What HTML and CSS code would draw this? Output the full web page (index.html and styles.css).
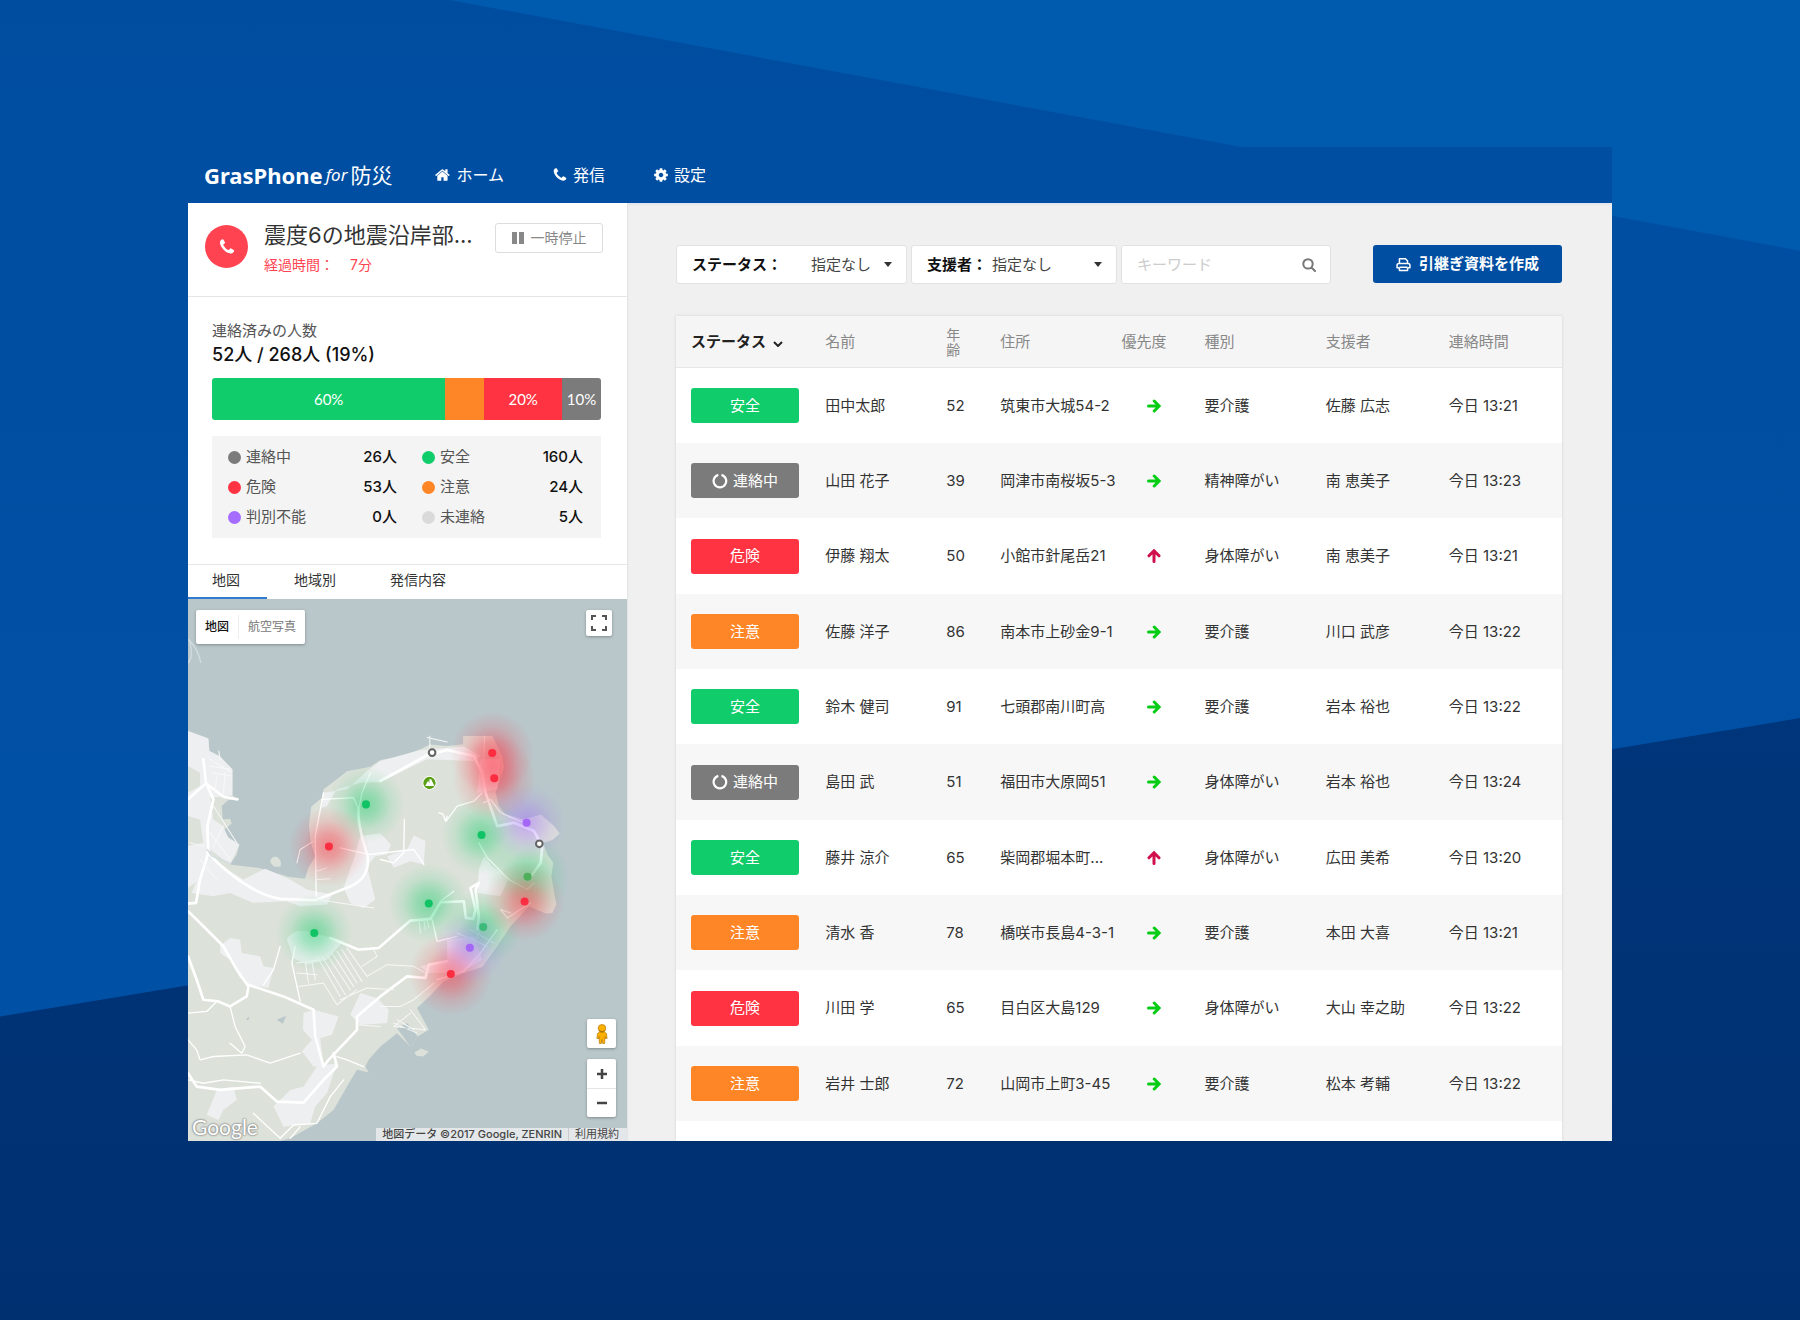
FILE: index.html
```html
<!DOCTYPE html>
<html lang="ja">

<head>
    <meta charset="utf-8" />
    <title>GrasPhone for 防災</title>
    <link rel="stylesheet" href="styles.css">
</head>

<body>

<svg class="sprite" aria-hidden="true">
    <symbol id="i-home" viewBox="0 0 1792 1792"><path d="M1408 992v480q0 26-19 45t-45 19h-384v-384h-256v384h-384q-26 0-45-19t-19-45v-480q0-1 .5-3t.5-3l575-474 575 474q1 2 1 6zm223-69l-62 74q-8 9-21 11h-3q-13 0-21-7l-692-577-692 577q-12 8-24 7-13-2-21-11l-62-74q-8-10-7-23.500t11-21.500l719-599q32-26 76-26t76 26l244 204v-195q0-14 9-23t23-9h192q14 0 23 9t9 23v408l219 182q10 8 11 21.500t-7 23.500z"/></symbol>
    <symbol id="i-phone" viewBox="0 0 1792 1792"><path d="M1600 1240q0 27-10 70.500t-21 68.500q-21 50-122 106-94 51-186 51-27 0-53-3.500t-57.500-12.500-47-14.500-55.500-20.500-49-18q-98-35-175-83-127-79-264-216t-216-264q-48-77-83-175-3-9-18-49t-20.500-55.500-14.500-47-12.500-57.500-3.500-53q0-92 51-186 56-101 106-122 25-11 68.500-21t70.500-10q14 0 21 3 18 6 53 76 11 19 30 54t35 63.500 31 53.500q3 4 17.500 25t21.500 35.500 7 28.500q0 20-28.500 50t-62 55-62 53-28.500 46q0 9 5 22.500t8.500 20.500 14 24 11.500 19q76 137 174 235t235 174q2 1 19 11.500t24 14 20.500 8.500 22.500 5q18 0 46-28.500t53-62 55-62 50-28.500q14 0 28.500 7t35.500 21.500 25 17.500q25 15 53.500 31t63.500 35 54 30q70 35 76 53 3 7 3 21z"/></symbol>
    <symbol id="i-cog" viewBox="0 0 1792 1792"><path d="M1152 896q0-106-75-181t-181-75-181 75-75 181 75 181 181 75 181-75 75-181zm512-109v222q0 12-8 23t-20 13l-185 28q-19 54-39 91 35 50 107 138 10 12 10 25t-9 23q-27 37-99 108t-94 71q-12 0-26-9l-138-108q-44 23-91 38-16 136-29 186-7 28-36 28h-222q-14 0-24.500-8.500t-11.500-21.500l-28-184q-49-16-90-37l-141 107q-10 9-25 9-14 0-25-11-126-114-165-168-7-10-7-23 0-12 8-23 15-21 51-66.500t54-70.500q-27-50-41-99l-183-27q-13-2-21-12.500t-8-23.500v-222q0-12 8-23t19-13l186-28q14-46 39-92-40-57-107-138-10-12-10-24 0-10 9-23 26-36 98.500-107.500t94.500-71.500q13 0 26 10l138 107q44-23 91-38 16-136 29-186 7-28 36-28h222q14 0 24.500 8.500t11.500 21.500l28 184q49 16 90 37l142-107q9-9 24-9 13 0 25 10 129 119 165 170 7 8 7 22 0 12-8 23-15 21-51 66.500t-54 70.500q26 50 41 98l183 28q13 2 21 12.500t8 23.500z"/></symbol>
    <symbol id="i-print" viewBox="0 0 14 14"><path d="M3.200 6V1.700h5.600l2 2V6M3.200 9.800v2.700h7.600V9.800M2.800 10H1V7.700Q1 6 2.800 6h8.400Q13 6 13 7.700V10h-1.800M3.200 9.600h7.600" fill="none" stroke="currentColor" stroke-width="1.400" stroke-linejoin="round"/></symbol>
    <symbol id="i-search" viewBox="0 0 14 14"><path d="M6 1.200a4.700 4.700 0 1 0 0 9.400a4.700 4.700 0 1 0 0-9.400M9.500 9.500L13 13" fill="none" stroke="currentColor" stroke-width="2" stroke-linecap="round"/></symbol>
    <symbol id="i-pause" viewBox="0 0 12 12"><path d="M0 0h5v12H0zM7 0h5v12H7z"/></symbol>
    <symbol id="i-arrow" viewBox="0 0 14 14"><path d="M1.500 7h10M7.200 2L12.200 7l-5 5" fill="none" stroke="currentColor" stroke-width="3" stroke-linecap="round"/></symbol>
    <symbol id="i-chevron" viewBox="0 0 10 6"><path d="M1 1l4 4 4-4" fill="none" stroke="currentColor" stroke-width="2"/></symbol>
    <symbol id="i-ring" viewBox="0 0 16 16"><path d="M9.500 1.900a6.300 6.300 0 1 1-3.200 0" fill="none" stroke="currentColor" stroke-width="2.200"/></symbol>
    <symbol id="i-full" viewBox="0 0 16 16"><path d="M1 5V1h4M11 1h4v4M15 11v4h-4M5 15H1v-4" fill="none" stroke="currentColor" stroke-width="2"/></symbol>
    <symbol id="i-plus" viewBox="0 0 12 12"><path d="M1 6h10M6 1v10" fill="none" stroke="currentColor" stroke-width="2.500"/></symbol>
    <symbol id="i-minus" viewBox="0 0 12 12"><path d="M1 6h10" fill="none" stroke="currentColor" stroke-width="2.500"/></symbol>
    <symbol id="i-pegman" viewBox="0 0 12 20">
        <path d="M3.500 8h5l2 1.500.6 5h-1.700l-.4-2-.4 7H6.700L6 15.500 5.300 19.500H3.400l-.4-7-.4 2H.9l.6-5z" fill="#fbaf00" stroke="#b5790a" stroke-width=".7"/>
        <circle cx="6" cy="4.300" r="3.800" fill="#fbaf00" stroke="#b5790a" stroke-width=".7"/>
        <path d="M3.200 6.600Q6 9.200 8.800 6.600" fill="none" stroke="#a36c06"/>
    </symbol>
</svg>

<div class="stage">
    <div class="app">

        <header class="topbar">
            <a class="logo" href="#"><b>GrasPhone</b><i>for</i><span>防災</span></a>
            <nav class="nav">
                <a href="#"><svg><use href="#i-home"/></svg>ホーム</a>
                <a href="#"><svg><use href="#i-phone"/></svg>発信</a>
                <a href="#"><svg><use href="#i-cog"/></svg>設定</a>
            </nav>
        </header>

        <div class="body">
            <aside class="side">

                <section class="event">
                    <span class="event-icon"><svg><use href="#i-phone"/></svg></span>
                    <div class="event-text">
                        <h1>震度6の地震沿岸部...</h1>
                        <p>経過時間：<span>7分</span></p>
                    </div>
                    <button type="button" class="pause"><svg><use href="#i-pause"/></svg>一時停止</button>
                </section>

                <section class="progress">
                    <h2>連絡済みの人数</h2>
                    <p class="total">52人 / 268人 (19%)</p>
                    <div class="bar">
                        <span class="safe" style="width:60%">60%</span>
                        <span class="caution" style="width:10%"></span>
                        <span class="danger" style="width:20%">20%</span>
                        <span class="calling" style="width:10%">10%</span>
                    </div>
                    <ul class="legend">
                        <li><i class="dot calling"></i>連絡中<b>26人</b></li>
                        <li><i class="dot safe"></i>安全<b>160人</b></li>
                        <li><i class="dot danger"></i>危険<b>53人</b></li>
                        <li><i class="dot caution"></i>注意<b>24人</b></li>
                        <li><i class="dot unknown"></i>判別不能<b>0人</b></li>
                        <li><i class="dot pending"></i>未連絡<b>5人</b></li>
                    </ul>
                </section>

                <nav class="tabs">
                    <a class="active" href="#">地図</a>
                    <a href="#">地域別</a>
                    <a href="#">発信内容</a>
                </nav>

                <div class="map">
                    <svg class="map-canvas" viewBox="24 120 1317 1623" preserveAspectRatio="xMinYMin slice" role="img" aria-label="地図">
                        <defs>
                            <radialGradient id="g-green"><stop offset="0" stop-color="#10cc66" stop-opacity=".48"/><stop offset=".3" stop-color="#10cc66" stop-opacity=".34"/><stop offset=".65" stop-color="#10cc66" stop-opacity=".12"/><stop offset="1" stop-color="#10cc66" stop-opacity="0"/></radialGradient>
                            <radialGradient id="g-red"><stop offset="0" stop-color="#ff3040" stop-opacity=".52"/><stop offset=".3" stop-color="#ff3040" stop-opacity=".38"/><stop offset=".65" stop-color="#ff3040" stop-opacity=".14"/><stop offset="1" stop-color="#ff3040" stop-opacity="0"/></radialGradient>
                            <radialGradient id="g-purple"><stop offset="0" stop-color="#a066ff" stop-opacity=".46"/><stop offset=".3" stop-color="#a066ff" stop-opacity=".32"/><stop offset=".65" stop-color="#a066ff" stop-opacity=".12"/><stop offset="1" stop-color="#a066ff" stop-opacity="0"/></radialGradient>
                        </defs>

                        <!-- land -->
                        <path class="land" d="M24 515L85 538L88 575L120 592L157 630L157 708L177 722L145 722L125 740L128 780L150 778L155 792L132 812L145 835L178 855L170 885L150 915L204 922L235 925L270 935L324 952L374 958L385 925L405 890L392 850L386 800L393 742L425 715L430 690L470 660L500 636L570 622L600 602L660 592L720 570L748 556L800 560L848 555L848 530L935 530L965 590L970 625L945 700L955 740L975 765L1030 780L1080 765L1120 800L1137 822L1115 842L1088 850L1100 885L1118 910L1112 950L1127 1035L1115 1060L1095 1062L1045 1040L990 1100L950 1160L905 1222L850 1240L790 1265L752 1305L710 1345L745 1410L712 1430L690 1460L650 1420L600 1460L565 1500L555 1520L565 1538L530 1530L500 1580L460 1650L410 1690L330 1735L300 1743L24 1743Z"/>
                        <path class="land" d="M270 908Q272 890 290 892Q308 905 300 922L282 922ZM702 1478L722 1466L745 1476L728 1490L708 1488Z"/>
                        <path class="water" d="M650 1405L680 1390L712 1430L690 1460ZM290 1380L318 1368L308 1392ZM198 1378L208 1370L204 1382Z"/>

                        <!-- built-up areas -->
                        <path class="town" d="M24 515L85 538L88 575L120 592L157 630L157 708L90 715L100 780L128 800L145 835L178 855L150 915L90 870L72 905L60 960L24 985Z"/>
                        <path class="park" d="M24 620L60 640L60 680L24 700ZM24 770L60 780L70 850L24 860Z"/>
                        <path class="town" d="M35 1000L80 890L190 960L255 928L330 960L380 990L455 1005L440 1035L360 1040L320 1025L220 1030L150 1000L100 1010Z"/>
                        <path class="town" d="M425 745L430 700L500 690L560 635L600 605L720 572L850 562L900 590L880 605L740 600L600 668L540 670L470 690L440 740Z"/>
                        <path class="town" d="M490 985L520 900L540 830L600 822L632 855L620 885L585 890L560 920L585 1020L550 1045L510 1030Z"/>
                        <path class="town" d="M620 890L680 870L700 828L735 845L730 915L690 905L640 925Z"/>
                        <path class="town" d="M895 930L910 890L935 920L985 955L960 1010L890 1000Z"/>
                        <path class="town" d="M320 1140Q340 1100 400 1120L490 1145L440 1200L380 1215L340 1195Z"/>
                        <path class="town" d="M120 1160L150 1135L180 1140L185 1180L240 1190L250 1220L280 1225L265 1285L210 1275L180 1255L150 1200L120 1180Z"/>
                        <path class="town" d="M510 1365L540 1300L590 1315L625 1350L620 1390L540 1395Z"/>
                        <path class="town" d="M370 1360L400 1350L475 1370L455 1425L420 1435L430 1520L400 1520L365 1475L395 1440L368 1410Z"/>
                        <path class="town" d="M370 1580L410 1520L470 1510L440 1600L405 1640L390 1690L310 1700L280 1640L330 1590Z"/>
                        <path class="town" d="M110 1590L160 1580L170 1620L130 1650L115 1680L80 1665Z"/>
                        <path class="town" d="M800 1140L880 1130L905 1200L840 1240L740 1240L720 1220L800 1200ZM900 600L960 600L950 690L890 700Z"/>

                        <!-- main roads -->
                        <path class="road wide" d="M24 720L78 672L70 600M78 672L130 712L172 720M78 672L100 720L82 800L85 880L60 960L48 1030L24 1032M82 880Q200 1000 300 1018L405 1022L500 985Q570 960 562 890Q530 790 535 750M24 1055L70 1100L130 1160L170 1230L205 1280L200 1310L150 1340L115 1325L70 1320L50 1260L24 1190M205 1275L310 1310L400 1350L405 1430L430 1520L445 1500L530 1410L530 1370L600 1310L680 1250L735 1255L745 1215L800 1205M24 1540L50 1580L120 1590L240 1580L290 1625L370 1628L430 1560L470 1520L460 1480"/>
                        <path class="road wide" d="M600 665L740 588L800 572L880 590L905 640L915 700L950 800L1000 790L1060 815L1085 860L1080 910L1045 960M450 1135L535 1170L595 1165L690 1083L750 1078L780 1028L850 1025L856 1075L878 1078L885 1050L870 985L895 970L885 990L895 1070L890 1110"/>
                        <path class="road" d="M345 1160L335 1210L360 1325M300 1160L280 1230L250 1275M535 750L545 700L570 640M425 720L520 715L535 750M430 700L405 830L408 1010M480 865L565 885L700 870L730 915M600 900L640 910L670 880L672 780M24 1360L80 1355L110 1325M150 1340L165 1400L195 1460L185 1480L150 1450M24 1440L50 1470L60 1500L100 1490L200 1485L270 1510L360 1480M24 1560L70 1570L130 1560L240 1570M220 1660L300 1735L340 1695L410 1690L450 1610L490 1560M330 1735L360 1700M820 995L780 1025M800 770L795 785L788 765L775 760M797 785L830 740L880 725L905 700M895 850L920 895L985 960L1040 990L1060 970M910 730L930 720L960 760L1030 790M1050 1030L980 1075L960 1050L990 1060M950 1110L900 1180L850 1235L770 1260M755 1080L770 1145L830 1130M470 1490L500 1500L550 1520"/>
                        <path class="road thin" d="M350 1210L420 1200M350 1240L410 1245M355 1280L430 1270L470 1335M375 1205L385 1270M395 1205L405 1260M410 1190L480 1310M425 1190L495 1305M440 1185L510 1290M455 1180L520 1280M470 1175L530 1270M485 1170L545 1265M500 1165L560 1250M480 1320L560 1285L640 1290M560 1250L620 1215L700 1220L735 1240M545 1220L590 1190L580 1170M470 1335L530 1290M600 1340L660 1340L700 1320L760 1270M690 1350L735 1410L640 1400L690 1360M640 1390L710 1420M650 1380L700 1410M530 1395L600 1400M715 1080L720 1120M730 1080L735 1110M740 1080L745 1105M830 1120L920 1160M870 1110L940 1150M900 1110L870 1170M740 535L800 548M748 530L748 570M912 530L910 600M116 575L120 600M90 600L155 640M88 620L150 630M95 640L155 650M110 650L105 700M135 640L130 705M100 740L170 850M90 820L150 900M100 860L130 800M60 900L110 960M30 850L70 860M350 910L360 870L400 845M410 935L440 925M410 960L450 958M410 1020L580 1045"/>
                        <path class="rail" d="M82 870L95 890L150 912M24 310Q40 300 30 250M62 310Q55 270 26 242"/>

                        <circle cx="402" cy="1120" r="115" fill="url(#g-green)"/>
                        <circle cx="557" cy="735" r="115" fill="url(#g-green)"/>
                        <circle cx="745" cy="1032" r="120" fill="url(#g-green)"/>
                        <circle cx="903" cy="827" r="120" fill="url(#g-green)"/>
                        <circle cx="1041" cy="952" r="125" fill="url(#g-green)"/>
                        <circle cx="908" cy="1102" r="115" fill="url(#g-green)"/>
                        <circle cx="446" cy="861" r="120" fill="url(#g-red)"/>
                        <circle cx="935" cy="581" r="125" fill="url(#g-red)"/>
                        <circle cx="941" cy="657" r="125" fill="url(#g-red)"/>
                        <circle cx="1032" cy="1026" r="120" fill="url(#g-red)"/>
                        <circle cx="811" cy="1243" r="125" fill="url(#g-red)"/>
                        <circle cx="1038" cy="790" r="115" fill="url(#g-purple)"/>
                        <circle cx="868" cy="1164" r="110" fill="url(#g-purple)"/>

                        <g class="pin">
                            <circle class="green" cx="402" cy="1120" r="12"/>
                            <circle class="green" cx="557" cy="735" r="12"/>
                            <circle class="green" cx="745" cy="1032" r="12"/>
                            <circle class="green" cx="903" cy="827" r="12"/>
                            <circle class="olive" cx="1041" cy="952" r="12"/>
                            <circle class="teal" cx="908" cy="1102" r="12"/>
                            <circle class="red" cx="446" cy="861" r="12"/>
                            <circle class="red" cx="935" cy="581" r="12"/>
                            <circle class="red" cx="941" cy="657" r="12"/>
                            <circle class="red" cx="1032" cy="1026" r="12"/>
                            <circle class="red" cx="811" cy="1243" r="12"/>
                            <circle class="purple" cx="1038" cy="790" r="12"/>
                            <circle class="purple" cx="868" cy="1164" r="12"/>
                        </g>
                        <circle class="station" cx="755" cy="580" r="10"/>
                        <circle class="station" cx="1076" cy="853" r="10"/>
                        <circle cx="747" cy="671" r="20" fill="#5a9f16" stroke="#fff" stroke-width="3"/>
                        <path d="M734 680L743 664L747 672L747 660H752L762 680Z" fill="#fff"/>
                    </svg>

                    <div class="map-type">
                        <button type="button" class="on">地図</button>
                        <button type="button">航空写真</button>
                    </div>
                    <button type="button" class="map-full" aria-label="全画面"><svg><use href="#i-full"/></svg></button>
                    <div class="map-tools">
                        <button type="button" class="pegman" aria-label="ストリートビュー"><svg><use href="#i-pegman"/></svg></button>
                        <div class="zoom">
                            <button type="button" aria-label="拡大"><svg><use href="#i-plus"/></svg></button>
                            <button type="button" aria-label="縮小"><svg><use href="#i-minus"/></svg></button>
                        </div>
                    </div>
                    <span class="google">Google</span>
                    <div class="credit"><span>地図データ ©2017 Google, ZENRIN</span><a href="#">利用規約</a></div>
                </div>
            </aside>

            <main class="main">
                <form class="filters">
                    <div class="field field-status">
                        <label for="status">ステータス：</label>
                        <select id="status"><option>指定なし</option></select>
                    </div>
                    <div class="field field-helper">
                        <label for="helper">支援者：</label>
                        <select id="helper"><option>指定なし</option></select>
                    </div>
                    <div class="field field-search">
                        <input type="search" placeholder="キーワード" aria-label="キーワード">
                        <svg><use href="#i-search"/></svg>
                    </div>
                    <button type="button" class="export"><svg><use href="#i-print"/></svg>引継ぎ資料を作成</button>
                </form>

                <div class="list">
                    <table>
                        <thead>
                            <tr>
                                <th class="c-status">ステータス<svg><use href="#i-chevron"/></svg></th>
                                <th class="c-name">名前</th>
                                <th class="c-age">年<br>齢</th>
                                <th class="c-address">住所</th>
                                <th class="c-priority">優先度</th>
                                <th class="c-type">種別</th>
                                <th class="c-helper">支援者</th>
                                <th class="c-time">連絡時間</th>
                            </tr>
                        </thead>
                        <tbody>
                            <tr>
                                <td class="c-status"><span class="badge safe">安全</span></td>
                                <td>田中太郎</td><td>52</td><td>筑東市大城54-2</td>
                                <td class="c-priority"><svg class="mid"><use href="#i-arrow"/></svg></td>
                                <td>要介護</td><td>佐藤 広志</td><td>今日 13:21</td>
                            </tr>
                            <tr>
                                <td class="c-status"><span class="badge calling"><svg><use href="#i-ring"/></svg>連絡中</span></td>
                                <td>山田 花子</td><td>39</td><td>岡津市南桜坂5-3</td>
                                <td class="c-priority"><svg class="mid"><use href="#i-arrow"/></svg></td>
                                <td>精神障がい</td><td>南 恵美子</td><td>今日 13:23</td>
                            </tr>
                            <tr>
                                <td class="c-status"><span class="badge danger">危険</span></td>
                                <td>伊藤 翔太</td><td>50</td><td>小館市針尾岳21</td>
                                <td class="c-priority"><svg class="high"><use href="#i-arrow"/></svg></td>
                                <td>身体障がい</td><td>南 恵美子</td><td>今日 13:21</td>
                            </tr>
                            <tr>
                                <td class="c-status"><span class="badge caution">注意</span></td>
                                <td>佐藤 洋子</td><td>86</td><td>南本市上砂金9-1</td>
                                <td class="c-priority"><svg class="mid"><use href="#i-arrow"/></svg></td>
                                <td>要介護</td><td>川口 武彦</td><td>今日 13:22</td>
                            </tr>
                            <tr>
                                <td class="c-status"><span class="badge safe">安全</span></td>
                                <td>鈴木 健司</td><td>91</td><td>七頭郡南川町高</td>
                                <td class="c-priority"><svg class="mid"><use href="#i-arrow"/></svg></td>
                                <td>要介護</td><td>岩本 裕也</td><td>今日 13:22</td>
                            </tr>
                            <tr>
                                <td class="c-status"><span class="badge calling"><svg><use href="#i-ring"/></svg>連絡中</span></td>
                                <td>島田 武</td><td>51</td><td>福田市大原岡51</td>
                                <td class="c-priority"><svg class="mid"><use href="#i-arrow"/></svg></td>
                                <td>身体障がい</td><td>岩本 裕也</td><td>今日 13:24</td>
                            </tr>
                            <tr>
                                <td class="c-status"><span class="badge safe">安全</span></td>
                                <td>藤井 涼介</td><td>65</td><td>柴岡郡堀本町...</td>
                                <td class="c-priority"><svg class="high"><use href="#i-arrow"/></svg></td>
                                <td>身体障がい</td><td>広田 美希</td><td>今日 13:20</td>
                            </tr>
                            <tr>
                                <td class="c-status"><span class="badge caution">注意</span></td>
                                <td>清水 香</td><td>78</td><td>橋咲市長島4-3-1</td>
                                <td class="c-priority"><svg class="mid"><use href="#i-arrow"/></svg></td>
                                <td>要介護</td><td>本田 大喜</td><td>今日 13:21</td>
                            </tr>
                            <tr>
                                <td class="c-status"><span class="badge danger">危険</span></td>
                                <td>川田 学</td><td>65</td><td>目白区大島129</td>
                                <td class="c-priority"><svg class="mid"><use href="#i-arrow"/></svg></td>
                                <td>身体障がい</td><td>大山 幸之助</td><td>今日 13:22</td>
                            </tr>
                            <tr>
                                <td class="c-status"><span class="badge caution">注意</span></td>
                                <td>岩井 士郎</td><td>72</td><td>山岡市上町3-45</td>
                                <td class="c-priority"><svg class="mid"><use href="#i-arrow"/></svg></td>
                                <td>要介護</td><td>松本 考輔</td><td>今日 13:22</td>
                            </tr>
                        </tbody>
                    </table>
                </div>
            </main>
        </div>

    </div>
</div>

</body>
</html>
```
FILE: styles.css
```css
* {
    box-sizing: border-box;
}

body, h1, h2, p, ul {
    margin: 0;
    padding: 0;
}

body {
    font-family: Inter, "Noto Sans CJK JP", sans-serif;
    font-size: 15px;
    line-height: 20px;
    color: #333;
}

button, input, select {
    font: inherit;
    color: inherit;
    border: 0;
    padding: 0;
    background: none;
}

a {
    color: inherit;
    text-decoration: none;
}

svg {
    fill: currentColor;
}

.sprite {
    display: none;
}

/* status colours */
.safe { background: #10cc6a; }
.caution { background: #ff8626; }
.danger { background: #ff3342; }
.calling { background: #7b7b7b; }
.unknown { background: #a46cff; }
.pending { background: #dadada; }

/* background */
.stage {
    position: relative;
    z-index: 0;
    display: flex;
    min-height: 100vh;
    padding: 147px 188px 179px;
    background: linear-gradient(#004da0, #0052a8);
}

.stage::before,
.stage::after {
    content: "";
    position: absolute;
    inset: 0;
    z-index: -1;
}

.stage::before {
    background: #005bae;
    clip-path: polygon(25% 0, 100% 0, 100% 19%);
}

.stage::after {
    background: linear-gradient(#00367c 50%, #003070);
    clip-path: polygon(0 77%, 100% 54.4%, 100% 100%, 0 100%);
}

.app {
    flex: 1;
    display: flex;
    flex-direction: column;
    background: #f0f0f0;
}

/* top bar */
.topbar {
    display: flex;
    align-items: center;
    height: 56px;
    padding: 0 16px;
    background: #004ea2;
    color: #fff;
}

.logo {
    display: flex;
    align-items: center;
    gap: 3px;
    margin-right: 43px;
    font-family: "Noto Sans", "Noto Sans CJK JP", sans-serif;
    font-size: 21px;
}

.logo b {
    font-size: 22px;
    font-weight: 700;
}

.logo i {
    font-size: 17px;
}

.nav {
    display: flex;
    gap: 48px;
    font-size: 16px;
}

.nav a {
    display: flex;
    align-items: center;
    gap: 5px;
}

.nav svg {
    width: 16px;
    height: 16px;
}

.body {
    flex: 1;
    display: flex;
}

/* left column */
.side {
    display: flex;
    flex-direction: column;
    width: 440px;
    background: #fff;
    border-right: 1px solid #e4e4e4;
}

.event {
    display: flex;
    align-items: flex-start;
    height: 94px;
    padding: 20px 24px 0 17px;
    border-bottom: 1px solid #e6e6e6;
}

.event-icon {
    display: flex;
    align-items: center;
    justify-content: center;
    width: 43px;
    height: 43px;
    margin-top: 2px;
    border-radius: 50%;
    background: #ff4350;
    color: #fff;
}

.event-icon svg {
    width: 18px;
    height: 18px;
}

.event-text {
    flex: 1;
    padding-left: 16px;
}

.event h1 {
    font-size: 22px;
    font-weight: 400;
    line-height: 24px;
    white-space: nowrap;
}

.event p {
    margin-top: 8px;
    font-size: 14px;
    color: #ff4350;
}

.event p span {
    padding-left: 16px;
}

.pause {
    display: flex;
    align-items: center;
    justify-content: center;
    gap: 7px;
    width: 108px;
    height: 30px;
    border: 1px solid #ddd;
    border-radius: 3px;
    font-size: 14px;
    color: #888;
}

.pause svg {
    width: 12px;
    height: 12px;
}

.progress {
    padding: 24px 26px 26px 24px;
    border-bottom: 1px solid #e6e6e6;
}

.progress h2 {
    font-size: 15px;
    font-weight: 400;
    color: #555;
}

.total {
    margin-top: 4px;
    font-size: 18px;
    font-weight: 500;
    color: #111;
}

.bar {
    display: flex;
    height: 42px;
    margin-top: 13px;
    border-radius: 3px;
    overflow: hidden;
    font-family: Lato, sans-serif;
    line-height: 42px;
    text-align: center;
    color: #fff;
}

.legend {
    display: grid;
    grid-template-columns: 21fr 20fr;
    column-gap: 25px;
    margin-top: 16px;
    padding: 6px 18px 6px 16px;
    list-style: none;
    background: #f4f4f4;
    color: #555;
}

.legend li {
    display: flex;
    align-items: center;
    height: 30px;
}

.legend b {
    margin-left: auto;
    font-weight: 500;
    color: #111;
}

.dot {
    width: 13px;
    height: 13px;
    margin-right: 5px;
    border-radius: 50%;
}

.tabs {
    display: flex;
    height: 34px;
    font-size: 14px;
}

.tabs a {
    padding: 5px 27px 0;
}

.tabs .active {
    padding-left: 24px;
    border-bottom: 2px solid #2f7bd0;
}

/* map */
.map {
    position: relative;
    flex: 1;
    min-height: 400px;
    background: #b9c7cb;
}

.map-canvas {
    position: absolute;
    width: 100%;
    height: 100%;
}

.land, .park { fill: #dce1d9; }
.water { fill: #b9c7cb; }
.town { fill: #eeeff0; }

.road, .rail {
    fill: none;
    stroke: #fff;
    stroke-width: 4;
    stroke-linejoin: round;
    stroke-linecap: round;
}

.road.wide { stroke-width: 8; }
.road.thin { stroke-width: 3; stroke: #f7f8f7; }
.rail { stroke: #d3dce0; }

.pin .green { fill: #10c465; }
.pin .olive { fill: #4fae5c; }
.pin .teal { fill: #3db97a; }
.pin .red { fill: #fb2d40; }
.pin .purple { fill: #a366f5; }

.station {
    fill: #fff;
    stroke: #636363;
    stroke-width: 6;
}

.map-type, .map-full, .pegman, .zoom {
    background: #fff;
    border-radius: 2px;
    box-shadow: 0 1px 3px rgba(0, 0, 0, .3);
}

.map-type {
    position: absolute;
    top: 11px;
    left: 8px;
    display: flex;
    height: 34px;
    padding: 5px 0;
    font-size: 12px;
    color: #777;
}

.map-type button {
    padding: 0 9px;
}

.map-type .on {
    border-right: 1px solid #eee;
    font-weight: 500;
    color: #111;
}

.map-full {
    position: absolute;
    top: 11px;
    right: 15px;
    display: flex;
    align-items: center;
    justify-content: center;
    width: 26px;
    height: 26px;
    color: #555;
}

.map-full svg {
    width: 16px;
    height: 16px;
}

.map-tools {
    position: absolute;
    right: 11px;
    bottom: 24px;
    display: flex;
    flex-direction: column;
    gap: 11px;
    width: 29px;
}

.map-tools button {
    display: flex;
    align-items: center;
    justify-content: center;
    width: 29px;
    height: 29px;
    color: #444;
}

.map-tools svg {
    width: 12px;
    height: 12px;
}

.map-tools .pegman svg {
    height: 20px;
}

.zoom button + button {
    box-shadow: inset 0 1px #e6e6e6;
}

.google {
    position: absolute;
    left: 4px;
    bottom: 4px;
    font-family: Lato, sans-serif;
    font-size: 21px;
    color: #fff;
    text-shadow: 0 0 2px #777, 0 0 2px #777;
}

.credit {
    position: absolute;
    right: 0;
    bottom: 0;
    display: flex;
    background: rgba(245, 245, 245, .7);
    font-size: 11px;
    font-weight: 500;
    line-height: 13px;
    color: #444;
}

.credit span {
    padding: 0 6px;
    border-right: 1px solid #ccc;
}

.credit a {
    padding: 0 8px 0 6px;
    font-weight: 400;
}

/* right column */
.main {
    flex: 1;
    display: flex;
    flex-direction: column;
    padding: 42px 50px 0 48px;
    box-shadow: inset 0 2px 2px #e2e6ec;
}

.filters {
    display: flex;
    gap: 4px;
    height: 39px;
    margin-bottom: 32px;
}

.field {
    display: flex;
    align-items: center;
    min-width: 0;
    padding: 0 14px 0 15px;
    background: #fff;
    border: 1px solid #e2e2e2;
    border-radius: 3px;
    white-space: nowrap;
}

.field label {
    font-weight: 700;
    color: #111;
}

.field select {
    appearance: none;
    color: #444;
}

.field-status::after,
.field-helper::after {
    content: "";
    border: 4px solid transparent;
    border-top: 5px solid #333;
    border-bottom: 0;
}

.field-status { flex: 0 1 231px; }
.field-helper { flex: 0 1 206px; }
.field-search { flex: 0 1 210px; }

.field-status select {
    margin: 0 12px 0 auto;
}

.field-helper select {
    flex: 1;
    margin-left: 5px;
}

.field-search input {
    flex: 1;
    min-width: 0;
    outline: 0;
}

.field-search input::placeholder {
    color: #ccc;
}

.field-search svg {
    flex: none;
    width: 14px;
    height: 14px;
    color: #777;
}

.export {
    flex: none;
    display: flex;
    align-items: center;
    justify-content: center;
    gap: 8px;
    width: 189px;
    height: 38px;
    margin-left: auto;
    border-radius: 3px;
    background: #004ea2;
    font-weight: 700;
    color: #fff;
}

.export svg {
    width: 15px;
    height: 15px;
}

.list {
    flex: 1;
    background: #fff;
    box-shadow: 0 0 3px rgba(0, 0, 0, .12);
}

table {
    width: 100%;
    table-layout: fixed;
    border-collapse: collapse;
}

th, td {
    padding: 0;
    text-align: left;
    white-space: nowrap;
}

thead tr {
    height: 52px;
    background: #f5f5f5;
    box-shadow: inset 0 -1px #e6e6e6;
}

th {
    font-weight: 400;
    color: #888;
}

tbody tr {
    height: 75px;
}

tbody tr:nth-child(3n) {
    height: 76px;
}

tbody tr:nth-child(even) {
    background: #f7f7f7;
}

.c-status {
    width: 149px;
    padding-left: 15px;
}

.c-name, .c-address, .c-type { width: 121px; }
.c-age { width: 54px; }
.c-priority { width: 83px; }
.c-helper { width: 123px; }
.c-time { width: 113px; }

th.c-status {
    font-weight: 700;
    color: #222;
}

th.c-status svg {
    width: 10px;
    height: 6px;
    margin-left: 7px;
}

th.c-age {
    font-size: 14px;
    line-height: 15px;
}

td.c-priority {
    padding-left: 26px;
}

td svg {
    display: block;
    width: 14px;
    height: 14px;
}

.mid {
    color: #06cc14;
}

.high {
    color: #d0104c;
    transform: rotate(-90deg);
}

.badge {
    display: flex;
    align-items: center;
    justify-content: center;
    gap: 5px;
    width: 108px;
    height: 35px;
    border-radius: 3px;
    color: #fff;
}

.badge svg {
    width: 16px;
    height: 16px;
}
```
